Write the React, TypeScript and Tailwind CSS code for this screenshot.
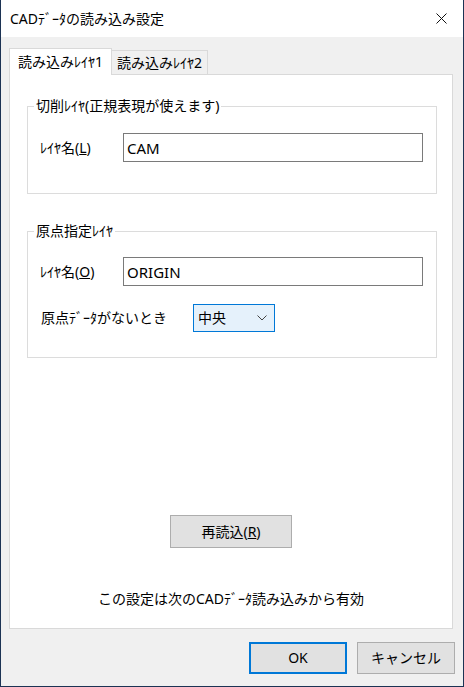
import React from 'react'

const font = { fontFamily: '"Noto Sans", "Noto Sans CJK JP", sans-serif' }

function Fieldset({ legend, children, className = '' }: { legend: string; children: React.ReactNode; className?: string }) {
  return (
    <fieldset className={`ml-[17px] w-[410px] border border-[#dcdcdc] ${className}`}>
      <legend className="ml-[6px] px-[2px] text-[14px] leading-[20px] text-black">{legend}</legend>
      {children}
    </fieldset>
  )
}

function TextRow({ label, mnemonic, value }: { label: string; mnemonic: string; value: string }) {
  return (
    <div className="flex items-center pl-[12px]">
      <div className="w-[83px] text-[14px] leading-[20px] text-black">
        {label}(<span className="underline">{mnemonic}</span>)
      </div>
      <div className="flex h-[29px] w-[300px] items-center border border-[#7a7a7a] bg-white pl-[3px] text-[15px] leading-[20px] text-black">
        {value}
      </div>
    </div>
  )
}

export default function App() {
  return (
    <div style={font} className="flex h-[687px] w-[464px] flex-col border-x border-b border-[#1c3354] bg-[#f0f0f0] text-black">
      {/* title bar */}
      <div className="flex h-[37px] items-center justify-between bg-white pl-[9px] pr-[16px]">
        <span className="text-[14px] leading-[20px]">CADﾃﾞｰﾀの読み込み設定</span>
        <svg width="11" height="11" viewBox="0 0 11 11">
          <path d="M0.5 0.5 L10.5 10.5 M10.5 0.5 L0.5 10.5" stroke="#111" strokeWidth="1" />
        </svg>
      </div>

      <div className="flex flex-1 flex-col pl-[8px]">
        {/* tabs */}
        <div className="relative z-10 -mb-px mt-[11px] flex items-end">
          <div className="flex h-[27px] w-[103px] items-center whitespace-nowrap border-x border-t border-[#d9d9d9] bg-white pl-[8px] text-[14px] leading-[20px]">
            読み込みﾚｲﾔ1
          </div>
          <div className="flex h-[25px] w-[96px] items-center whitespace-nowrap border-y border-r border-[#d9d9d9] bg-[#f0f0f0] pl-[5px] text-[14px] leading-[20px]">
            読み込みﾚｲﾔ2
          </div>
        </div>

        {/* panel */}
        <div className="flex h-[555px] w-[444px] flex-col border border-[#d9d9d9] bg-white">
          <Fieldset legend="切削ﾚｲﾔ(正規表現が使えます)" className="mt-[21px] h-[98px]">
            <div className="mt-[17px]">
              <TextRow label="ﾚｲﾔ名" mnemonic="L" value="CAM" />
            </div>
          </Fieldset>

          <Fieldset legend="原点指定ﾚｲﾔ" className="mt-[27px] h-[137px]">
            <div className="mt-[16px]">
              <TextRow label="ﾚｲﾔ名" mnemonic="O" value="ORIGIN" />
            </div>
            <div className="mt-[18px] flex items-center pl-[13px]">
              <div className="w-[152px] text-[14px] leading-[20px]">原点ﾃﾞｰﾀがないとき</div>
              <div className="flex h-[28px] w-[82px] items-center justify-between border border-[#0078d7] bg-[#e5f1fb] pl-[4px] pr-[7px] text-[14px] leading-[20px]">
                <span>中央</span>
                <svg width="10" height="6" viewBox="0 0 10 6">
                  <polyline points="0.5,0.5 5,5 9.5,0.5" fill="none" stroke="#444" strokeWidth="1" />
                </svg>
              </div>
            </div>
          </Fieldset>

          <div className="mt-[157px] flex justify-center">
            <button className="flex h-[33px] w-[122px] items-center justify-center border border-[#adadad] bg-[#e1e1e1] text-[14px] leading-[20px]">
              再読込(<span className="underline">R</span>)
            </button>
          </div>

          <div className="mt-[41px] text-center text-[14px] leading-[20px]">
            この設定は次のCADﾃﾞｰﾀ読み込みから有効
          </div>
        </div>

        {/* footer buttons */}
        <div className="mt-[13px] flex justify-end gap-[10px] pr-[8px]">
          <button className="flex h-[32px] w-[98px] items-center justify-center border-2 border-[#0078d7] bg-[#e1e1e1] text-[14px] leading-[20px]">
            OK
          </button>
          <button className="flex h-[32px] w-[98px] items-center justify-center border border-[#adadad] bg-[#e1e1e1] text-[14px] leading-[20px]">
            キャンセル
          </button>
        </div>
      </div>
    </div>
  )
}
